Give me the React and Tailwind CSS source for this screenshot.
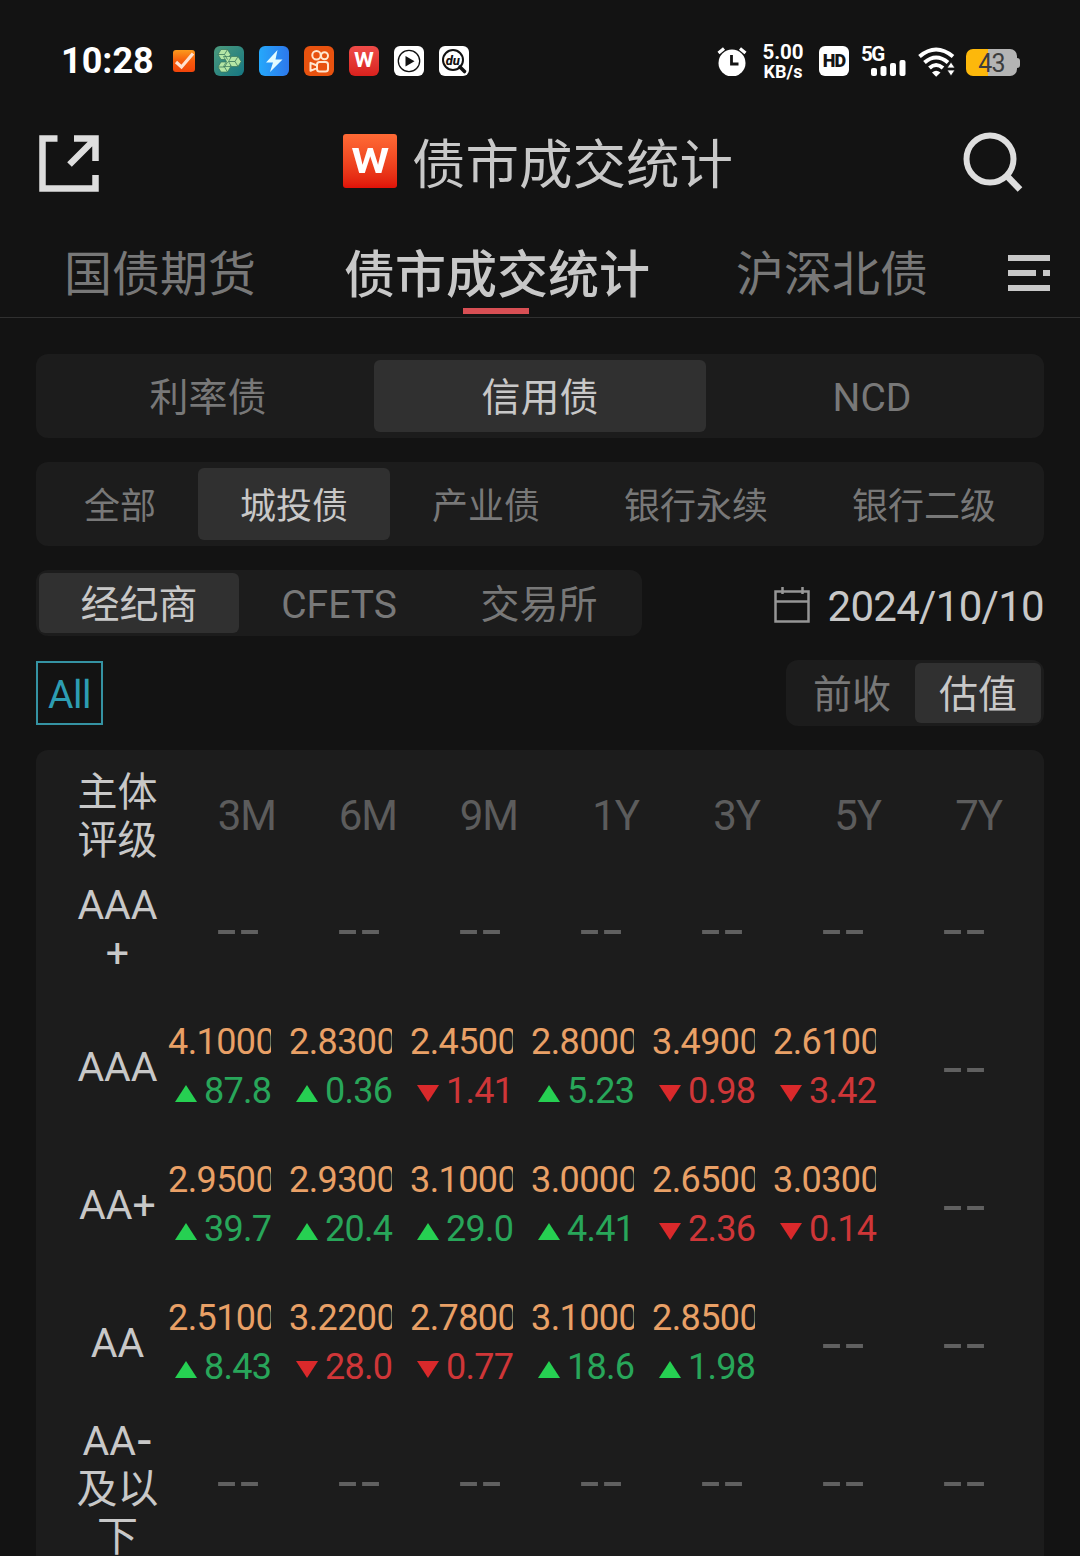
const categories = ['利率债', '信用债', 'NCD'];
const sectors = ['全部', '城投债', '产业债', '银行永续', '银行二级'];
const sources = ['经纪商', 'CFETS', '交易所'];
const terms = ['3M', '6M', '9M', '1Y', '3Y', '5Y', '7Y'];

const rows = [
    { rating: ['AAA', '+'], cells: [null, null, null, null, null, null, null] },
    {
        rating: ['AAA'],
        cells: [
            ['4.1000', 'up', '87.8'],
            ['2.8300', 'up', '0.36'],
            ['2.4500', 'down', '1.41'],
            ['2.8000', 'up', '5.23'],
            ['3.4900', 'down', '0.98'],
            ['2.6100', 'down', '3.42'],
            null,
        ],
    },
    {
        rating: ['AA+'],
        cells: [
            ['2.9500', 'up', '39.7'],
            ['2.9300', 'up', '20.4'],
            ['3.1000', 'up', '29.0'],
            ['3.0000', 'up', '4.41'],
            ['2.6500', 'down', '2.36'],
            ['3.0300', 'down', '0.14'],
            null,
        ],
    },
    {
        rating: ['AA'],
        cells: [
            ['2.5100', 'up', '8.43'],
            ['3.2200', 'down', '28.0'],
            ['2.7800', 'down', '0.77'],
            ['3.1000', 'up', '18.6'],
            ['2.8500', 'up', '1.98'],
            null,
            null,
        ],
    },
    { rating: ['AA-', '及以', '下'], cells: [null, null, null, null, null, null, null] },
];

function StatusBar() {
    return (
        <div className="flex h-[110px] shrink-0 items-start pt-[46px] pr-[60px] pl-[61px] text-white">
            <div className="w-[112px] text-[36px] leading-[31px] font-bold">10:28</div>
            <svg className="mt-1 h-[22px] w-[22px]" viewBox="0 0 22 22">
                <defs>
                    <linearGradient id="check" x1="0" y1="0" x2="0" y2="1">
                        <stop offset="0" stopColor="#fb9a1e" />
                        <stop offset=".5" stopColor="#f75c0c" />
                        <stop offset="1" stopColor="#f2440a" />
                    </linearGradient>
                </defs>
                <rect width="22" height="22" rx="3" fill="url(#check)" />
                <path d="M3 12l5.500 5L20 3.500" fill="none" stroke="#ffe0cf" strokeWidth="3.200" />
            </svg>
            <div className="ml-[19px] flex gap-[15px]">
                <svg className="h-[30px] w-[30px]" viewBox="0 0 30 30">
                    <defs>
                        <linearGradient id="hex" x1="0" y1="0" x2="1" y2="1">
                            <stop offset="0" stopColor="#4c9a7c" />
                            <stop offset="1" stopColor="#157682" />
                        </linearGradient>
                    </defs>
                    <rect width="30" height="30" rx="6" fill="url(#hex)" />
                    <g fill="#b4e6a5" stroke="#38775c" strokeWidth=".7" strokeLinejoin="round">
                        <path d="M7 3.500h6.500l3 5-3 5H7l-3-5z" />
                        <path d="M7 16h6.500l3 5-3 5H7l-3-5z" />
                        <path d="M9.500 10.500H16l3 5-3 5H9.500l3-5z" />
                        <path d="M17.500 10.500H24l3.200 5-3.200 5h-6.500l-3-5z" />
                    </g>
                    <path
                        d="M4 8.500h6.500l3-5M10.500 8.500l3 5M4 21h6.500l3-5M10.500 21l3 5M14.500 15.500H21l3-5M21 15.500l3 5"
                        fill="none"
                        stroke="#38775c"
                        strokeWidth=".8"
                    />
                </svg>
                <svg className="h-[30px] w-[30px]" viewBox="0 0 30 30">
                    <defs>
                        <linearGradient id="bolt" x1="0" y1="0" x2="1" y2="0">
                            <stop offset="0" stopColor="#25a8fb" />
                            <stop offset="1" stopColor="#2d78ec" />
                        </linearGradient>
                    </defs>
                    <rect width="30" height="30" rx="6" fill="url(#bolt)" />
                    <path d="M18.500 4L7 16.500h7L11 26l12.500-12.500h-7z" fill="#e2fbff" />
                </svg>
                <svg className="h-[30px] w-[30px]" viewBox="0 0 30 30">
                    <rect width="30" height="30" rx="6" fill="#e8520f" />
                    <g fill="none" stroke="#ffe6cf" strokeWidth="2">
                        <circle cx="12.500" cy="9.300" r="4.200" />
                        <circle cx="20.500" cy="9.800" r="3.500" />
                        <rect x="13" y="16" width="11" height="9.500" rx="2.500" />
                        <path d="M13 19.500l-6.500-2.700v8l6.500-2.700z" strokeLinejoin="round" />
                    </g>
                </svg>
                <div className="flex h-[30px] w-[30px] items-center justify-center rounded-md bg-linear-to-b from-[#ef4b48] to-[#d9201c] pb-[5px] text-[27px] leading-none font-semibold">
                    w
                </div>
                <svg className="h-[30px] w-[30px]" viewBox="0 0 30 30">
                    <rect width="30" height="30" rx="6" fill="#fff" />
                    <circle cx="15" cy="15" r="10.700" fill="none" stroke="#111" strokeWidth="1.300" />
                    <path d="M11.500 10v10.500l9-5.300z" fill="#111" />
                </svg>
                <svg className="h-[30px] w-[30px]" viewBox="0 0 30 30">
                    <rect width="30" height="30" rx="6" fill="#fff" />
                    <circle cx="14" cy="14" r="10" fill="none" stroke="#111" strokeWidth="2" />
                    <path d="M21 21l4.500 4.500" stroke="#111" strokeWidth="3.600" strokeLinecap="round" />
                    <text x="13.800" y="18.500" textAnchor="middle" fontSize="13" fontWeight="800" fontStyle="italic" fill="#111">
                        du
                    </text>
                </svg>
            </div>

            <div className="ml-auto flex items-start">
                <svg className="h-[30px] w-[30px]" viewBox="0 0 30 30">
                    <circle cx="15" cy="17" r="13.500" fill="#fff" />
                    <path d="M1.500 7L7 2.500M28.500 7L23 2.500" stroke="#fff" strokeWidth="3.200" />
                    <path d="M14.500 9v9h7" fill="none" stroke="#141414" strokeWidth="2.800" />
                </svg>
                <div className="-mt-[4px] ml-[13px] w-[46px] text-center text-[20.5px] leading-[20px] font-bold">
                    <div>5.00</div>
                    <div className="text-[18px] leading-[19px]">KB/s</div>
                </div>
                <div className="ml-[13px] flex h-[30px] w-[30px] items-center justify-center rounded-md bg-white text-[#141414]">
                    <span className="text-[18px] leading-none font-black tracking-[-1px]">HD</span>
                </div>
                <div className="relative ml-3 h-[30px] w-[45px]">
                    <div className="-mt-[2px] text-[20.5px] leading-[20px] font-bold tracking-[-1.5px]">5G</div>
                    <svg className="absolute right-0 bottom-0 h-4 w-9" viewBox="0 0 36 16" fill="#fff">
                        <rect x="1" y="8" width="6" height="8" rx="2" />
                        <rect x="10.500" y="6" width="6" height="10" rx="2" />
                        <rect x="20" y="3" width="6" height="13" rx="2" />
                        <rect x="29.500" y="0" width="6" height="16" rx="2" />
                    </svg>
                </div>
                <svg className="ml-3 h-[31px] w-[37px]" viewBox="0 0 37 31" fill="none">
                    <path d="M1.500 10.500Q18 -3.500 35 10.500M6.500 16.500Q18 6.500 30 16.500M11.500 22Q18 16 25 22" stroke="#fff" strokeWidth="4" />
                    <path d="M14 26.500Q18 23 22.500 26.500L18.200 30.800z" fill="#fff" />
                    <path d="M29 22l4-6 4 6zM29 24h8l-4 6z" fill="#fff" stroke="#141414" strokeWidth=".8" />
                </svg>
                <div className="mt-[3px] ml-[11px] flex items-center">
                    <div className="flex h-[27px] w-[51px] items-center justify-center rounded-[7px] bg-linear-to-r from-[#fdb80b] from-43% to-[#b4b4b4] to-43% pt-px text-[25px] leading-none tracking-[-0.8px] text-[#3c3c3c]">
                        43
                    </div>
                    <div className="h-[10px] w-[3px] rounded-r-sm bg-[#b4b4b4]" />
                </div>
            </div>
        </div>
    );
}

function Header() {
    return (
        <div className="flex h-[104px] shrink-0 items-center justify-between pr-[57px] pl-[39px]">
            <svg className="mt-[3px] h-[57px] w-[60px]" viewBox="0 0 60 57" fill="none" stroke="#dedede" strokeWidth="6.500">
                <path d="M18.500 3.500h-15v50h53V40M35 3.500h21.500V26M30.500 29.500L54 6" />
            </svg>
            <div className="flex items-center gap-[15px] pl-[14px]">
                <div className="-mt-[2px] flex h-[54px] w-[54px] items-center justify-center rounded-[3px] bg-linear-to-b from-[#ff6a35] to-[#e01008] pb-[10px] text-[47px] leading-none font-semibold text-white">
                    <span className="scale-x-110">w</span>
                </div>
                <h1 className="pt-[7px] text-[53.5px] leading-[60px] text-[#c8c8c8]">债市成交统计</h1>
            </div>
            <svg className="h-[60px] w-[60px]" viewBox="0 0 60 60" fill="none" stroke="#dedede">
                <circle cx="27" cy="27" r="23.500" strokeWidth="6" />
                <path d="M43 43l14 14.500" strokeWidth="6.500" />
            </svg>
        </div>
    );
}

function PageTabs() {
    return (
        <div className="flex h-[104px] shrink-0 items-center border-b border-[#303030] pl-16 text-[48px] leading-[60px] text-[#787878]">
            <div className="pt-[19px]">国债期货</div>
            <div className="relative ml-[88px] pt-[20px] text-[51px] font-medium text-[#c8c8c8]">
                债市成交统计
                <div className="absolute -bottom-[8px] left-[119px] h-[6px] w-[66px] bg-[#d84f54]" />
            </div>
            <div className="ml-[86px] pt-[19px]">沪深北债</div>
            <svg className="mt-[14px] ml-[80px] h-9 w-[42px]" viewBox="0 0 42 36" fill="#c8c8c8">
                <path d="M0 0h42v6H0zM0 15h28v6H0zM35 15h7v6h-7zM0 30h42v6H0z" />
            </svg>
        </div>
    );
}

function itemClass(active) {
    return `flex items-center justify-center rounded-md pt-1 ${active ? 'bg-[#303030] text-[#c8c8c8]' : 'text-[#787878]'}`;
}

function Change({ dir, value }) {
    const up = dir === 'up';
    return (
        <div className={`flex items-center pl-2 ${up ? 'text-[#28a65a]' : 'text-[#cf3638]'}`}>
            <svg className={`mt-[3px] h-[17px] w-[22px] shrink-0 ${up ? '' : 'rotate-180'}`} viewBox="0 0 22 17">
                <path d="M11 0l11 17H0z" fill={up ? '#26d052' : '#da292b'} />
            </svg>
            <span className="ml-[7px] tracking-[-0.7px]">{value}</span>
        </div>
    );
}

function Cell({ data }) {
    if (!data) {
        return (
            <div className="flex h-[138px] w-[121px] items-center justify-end pr-[27px]">
                <span className="origin-right scale-x-128 font-['DejaVu_Sans'] text-[50px] leading-none text-[#606060]">--</span>
            </div>
        );
    }
    const [price, dir, value] = data;
    return (
        <div className="flex h-[138px] w-[121px] flex-col justify-center pr-[17px] text-[36px] leading-[49px]">
            <div className="overflow-hidden pl-px tracking-[-0.6px] whitespace-nowrap text-[#e9a066]">{price}</div>
            <Change dir={dir} value={value} />
        </div>
    );
}

// the minus of a rating is as wide as its plus
function RatingLine({ text }) {
    if (!text.endsWith('-')) {
        return <div>{text}</div>;
    }
    return (
        <div>
            {text.slice(0, -1)}
            <span className="font-['DejaVu_Sans'] text-[46px] leading-none">-</span>
        </div>
    );
}

export default function App() {
    return (
        <div className="flex h-[1556px] w-[1080px] flex-col overflow-hidden bg-[#131313] font-[Roboto,'Noto_Sans_CJK_SC',sans-serif]">
            <StatusBar />
            <Header />
            <PageTabs />

            <div className="flex flex-col gap-6 px-9 pt-9">
                <div className="grid h-[84px] grid-cols-3 rounded-xl bg-[#1c1c1c] p-[6px] text-[39px]">
                    {categories.map((name, i) => (
                        <div key={name} className={itemClass(i === 1)}>
                            {name}
                        </div>
                    ))}
                </div>

                <div className="flex h-[84px] rounded-xl bg-[#1c1c1c] p-[6px] text-[36px]">
                    {sectors.map((name, i) => (
                        <div key={name} className={`px-[42px] ${itemClass(i === 1)}`}>
                            <span className="pt-[2px]">{name}</span>
                        </div>
                    ))}
                </div>

                <div className="flex items-center justify-between">
                    <div className="grid h-[66px] w-[606px] grid-cols-3 rounded-xl bg-[#1c1c1c] p-[3px] text-[39px] leading-[50px]">
                        {sources.map((name, i) => (
                            <div key={name} className={itemClass(i === 0)}>
                                {name}
                            </div>
                        ))}
                    </div>
                    <div className="flex items-center pt-1">
                        <svg className="h-9 w-9" viewBox="0 0 36 36" fill="none" stroke="#969696" strokeWidth="2.500">
                            <path d="M1.500 4.500h33v30h-33zM1.500 14.500h33M8.500 0v7M28.500 0v7" />
                        </svg>
                        <span className="ml-[18px] pt-1 text-[42px] leading-[44px] tracking-[-0.7px] text-[#c8c8c8]">2024/10/10</span>
                    </div>
                </div>

                <div className="flex items-center justify-between">
                    <div className="flex h-16 w-[67px] items-center justify-center border-2 border-[#3593a3] pt-1 text-[39px] leading-none tracking-[-0.4px] text-[#2d9db2]">
                        All
                    </div>
                    <div className="grid h-[66px] w-[258px] grid-cols-2 rounded-xl bg-[#1c1c1c] p-[3px] text-[39px] leading-[50px]">
                        <div className={itemClass(false)}>前收</div>
                        <div className={itemClass(true)}>估值</div>
                    </div>
                </div>

                <div className="rounded-t-xl bg-[#1c1c1c] pt-5 pl-8">
                    <div className="flex h-[90px] items-center">
                        <div className="w-[99px] pt-[3px] text-center text-[40px] leading-[48px] text-[#c8c8c8]">
                            主体
                            <br />
                            评级
                        </div>
                        {terms.map((term) => (
                            <div
                                key={term}
                                className="w-[121px] pt-[2px] pr-[12px] text-right text-[42px] leading-[48px] tracking-[-1px] text-[#5c5c5c]"
                            >
                                {term}
                            </div>
                        ))}
                    </div>
                    {rows.map((row) => (
                        <div key={row.rating.join('')} className="flex items-start">
                            <div className="flex min-h-[138px] w-[99px] flex-col justify-center py-1 text-center text-[41px] leading-[48px] text-[#c8c8c8]">
                                {row.rating.map((line) => (
                                    <RatingLine key={line} text={line} />
                                ))}
                            </div>
                            {row.cells.map((cell, i) => (
                                <Cell key={terms[i]} data={cell} />
                            ))}
                        </div>
                    ))}
                </div>
            </div>
        </div>
    );
}
